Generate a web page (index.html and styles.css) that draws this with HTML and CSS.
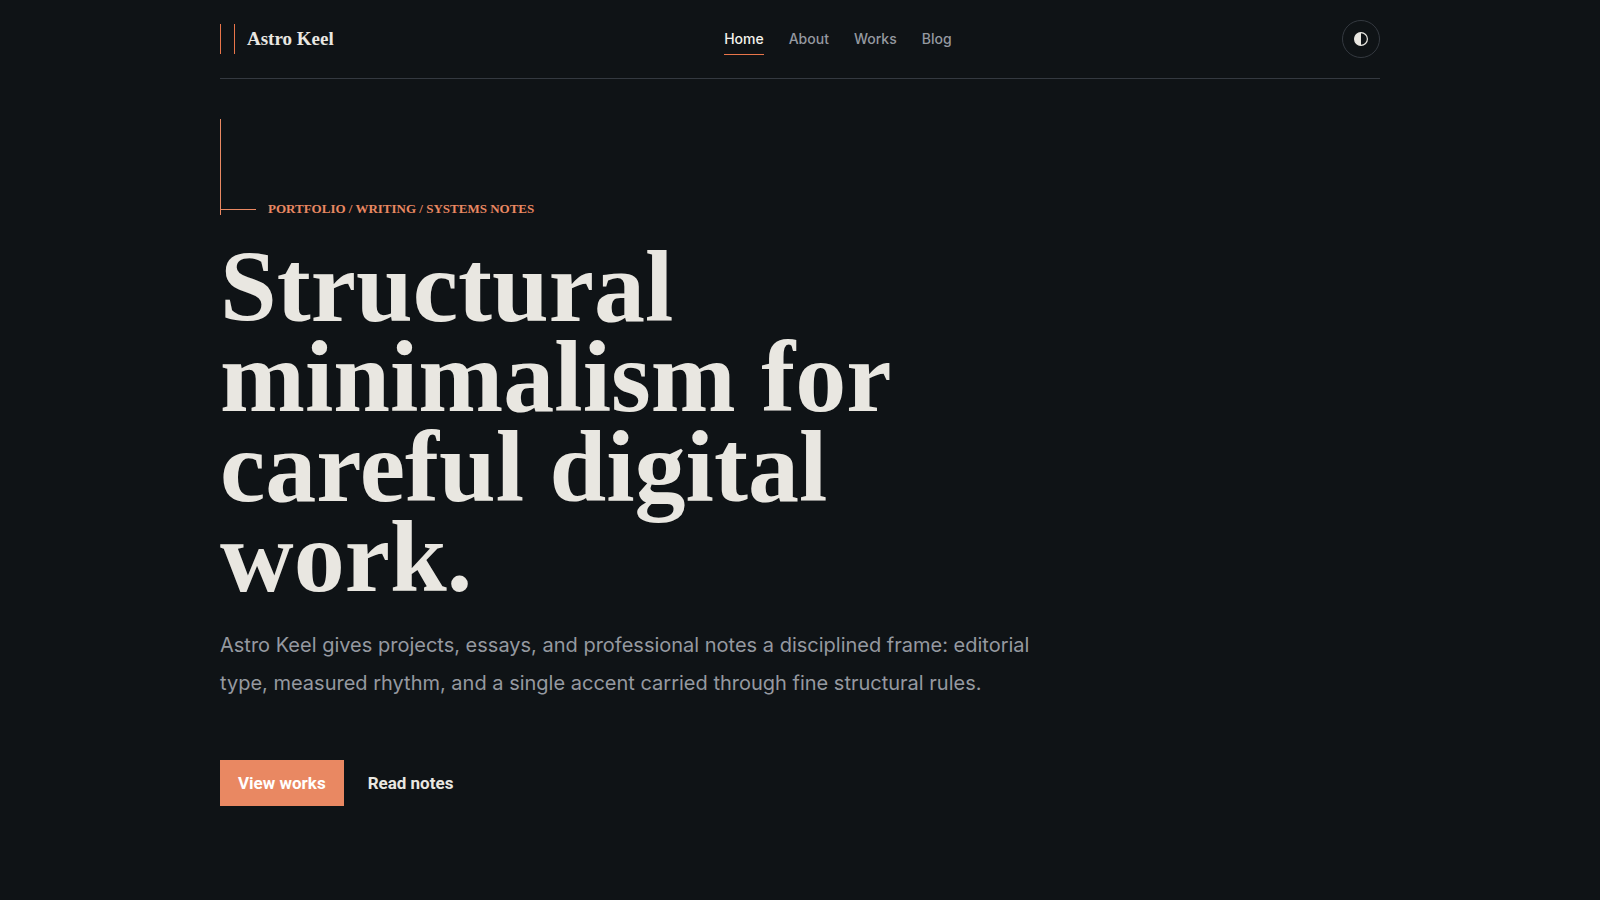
FILE: index.html
```html
<!doctype html>
<html lang="en">
  <head>
    <meta charset="utf-8">
    <meta name="viewport" content="width=device-width, initial-scale=1">
    <title>Astro Keel</title>
    <link rel="stylesheet" href="styles.css">
  </head>
  <body>
    <div class="wrapper">
      <header class="site-header">
        <a class="brand" href="#"><span class="brand-mark"></span>Astro Keel</a>
        <nav class="site-nav" aria-label="Main">
          <a class="active" href="#" aria-current="page">Home</a>
          <a href="#about">About</a>
          <a href="#works">Works</a>
          <a href="#blog">Blog</a>
        </nav>
        <button class="theme-toggle" type="button" aria-label="Toggle theme">
          <svg width="14" height="14" viewBox="0 0 14 14" aria-hidden="true">
            <circle cx="7" cy="7" r="6.4" fill="none" stroke="currentColor" stroke-width="1.2" />
            <path d="M7 0.6a6.4 6.4 0 0 0 0 12.8z" fill="currentColor" />
          </svg>
        </button>
      </header>

      <main class="hero">
        <p class="eyebrow">Portfolio / Writing / Systems Notes</p>
        <h1>Structural minimalism for careful digital work.</h1>
        <p class="lead">Astro Keel gives projects, essays, and professional notes a disciplined frame: editorial type, measured rhythm, and a single accent carried through fine structural rules.</p>
        <div class="actions">
          <a class="button" href="#works">View works</a>
          <a class="text-link" href="#blog">Read notes</a>
        </div>
      </main>
    </div>
  </body>
</html>
```
FILE: styles.css
```css
* {
  box-sizing: border-box;
}

body {
  margin: 0;
  background: #0f1316;
  color: #e9e7e1;
  font-family: Inter, "Liberation Sans", sans-serif;
}

a {
  color: inherit;
  text-decoration: none;
}

.wrapper {
  max-width: 1200px;
  margin: 0 auto;
  padding: 0 20px;
}

/* header */

.site-header {
  display: flex;
  align-items: center;
  justify-content: space-between;
  padding: 20px 0;
  border-bottom: 1px solid #343940;
}

.brand {
  display: flex;
  align-items: center;
  gap: 12px;
  font-family: "Liberation Serif", "Times New Roman", serif;
  font-size: 19px;
  font-weight: bold;
}

.brand-mark {
  width: 15px;
  height: 30px;
  border: solid #e8754a;
  border-width: 0 1px;
}

.site-nav {
  display: flex;
  gap: 25px;
  color: #9599a0;
  font-size: 14px;
  font-weight: 500;
  line-height: 22px;
}

.site-nav a {
  padding: 5px 0 4px;
  border-bottom: 1px solid transparent;
}

.site-nav .active {
  color: #f4f2ec;
  border-color: #e8754a;
}

.theme-toggle {
  display: flex;
  align-items: center;
  justify-content: center;
  width: 38px;
  height: 38px;
  padding: 0;
  border: 1px solid #343940;
  border-radius: 50%;
  background: none;
  color: #e9e7e1;
}

/* hero */

.hero {
  position: relative;
  padding: 119px 0 80px;
}

.hero::before {
  content: "";
  position: absolute;
  top: 40px;
  left: 0;
  width: 1px;
  height: 96px;
  background: #e98862;
}

.eyebrow {
  display: flex;
  align-items: center;
  gap: 12px;
  margin: 0 0 22px;
  color: #e98862;
  font-family: "Liberation Serif", "Times New Roman", serif;
  font-size: 13px;
  font-weight: bold;
  line-height: 22px;
  text-transform: uppercase;
}

.eyebrow::before {
  content: "";
  width: 36px;
  height: 1px;
  background: #e98862;
}

h1 {
  max-width: 760px;
  margin: 0 0 24px;
  font-family: "Liberation Serif", "Times New Roman", serif;
  font-size: 102px;
  font-weight: bold;
  line-height: 90px;
}

.lead {
  max-width: 830px;
  margin: 0 0 58px;
  color: #9599a0;
  font-size: 20px;
  line-height: 38px;
}

.actions {
  display: flex;
  align-items: center;
  gap: 24px;
  font-family: Roboto, "Liberation Sans", sans-serif;
  font-size: 17px;
  font-weight: bold;
  line-height: 22px;
}

.button {
  padding: 12px 18px;
  background: #e98862;
  color: #fff;
}
```
